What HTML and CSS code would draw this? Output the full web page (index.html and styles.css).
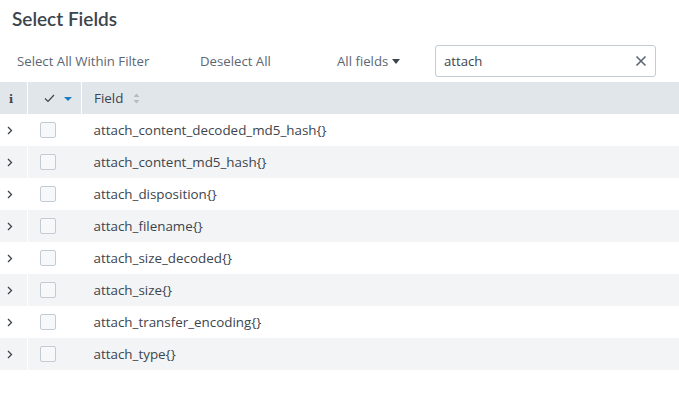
FILE: index.html
```html
<!DOCTYPE html>
<html lang="en">
<head>
  <meta charset="UTF-8" />
  <title>Select Fields</title>
  <link rel="stylesheet" href="styles.css">
</head>
<body>
  <div class="panel">
    <h1>Select Fields</h1>

    <!-- Toolbar -->
    <div class="toolbar">
      <button class="link-btn select-all">Select All Within Filter</button>
      <button class="link-btn deselect">Deselect All</button>
      <button class="link-btn fields-menu">All fields <span class="caret"></span></button>
      <div class="search">
        <input type="text" value="attach" />
        <svg class="clear" width="12" height="12" viewBox="0 0 12 12">
          <path d="M1.5 1.5 L10.5 10.5 M10.5 1.5 L1.5 10.5" stroke="#5c6773" stroke-width="1.6" fill="none"/>
        </svg>
      </div>
    </div>

    <table class="fields">
      <thead>
        <tr>
          <th class="col-info"><span class="info">i</span></th>
          <th class="col-check">
            <svg width="11" height="9" viewBox="0 0 11 9"><path d="M1 4.5 L4 7.5 L10 1" stroke="#3c444d" stroke-width="1.2" fill="none"/></svg>
            <span class="blue-caret"></span>
          </th>
          <th class="col-field">Field
            <svg class="sort" width="7" height="11" viewBox="0 0 7 11"><path d="M3.5 0.5 L6.5 4 L0.5 4 Z M3.5 10.5 L6.5 7 L0.5 7 Z" fill="#b5bcc4"/></svg>
          </th>
        </tr>
      </thead>
      <tbody id="rows"></tbody>
    </table>
  </div>

  <script>
  const fields = [
    'attach_content_decoded_md5_hash{}',
    'attach_content_md5_hash{}',
    'attach_disposition{}',
    'attach_filename{}',
    'attach_size_decoded{}',
    'attach_size{}',
    'attach_transfer_encoding{}',
    'attach_type{}'
  ];

  const rowsEl = document.getElementById('rows');

  fields.forEach((name) => {
    const tr = document.createElement('tr');
    tr.innerHTML = `
      <td class="col-info">
        <svg width="6" height="9" viewBox="0 0 6 9"><path d="M1 1 L4.5 4.5 L1 8" stroke="#3c444d" stroke-width="1.3" fill="none"/></svg>
      </td>
      <td class="col-check"><span class="box"></span></td>
      <td class="col-field">${name}</td>`;
    rowsEl.appendChild(tr);
  });
  </script>
</body>
</html>
```

FILE: styles.css
```css
body {
  margin: 0;
  font-family: "Open Sans", "Lato", sans-serif;
  background-color: white;
  color: #3c444d;
}

.panel {
  padding-top: 6px;
}

h1 {
  margin: 0 0 0 12px;
  font-family: "Lato", sans-serif;
  font-size: 19px;
  font-weight: 600;
  line-height: 26px;
  color: #3c444d;
}

.toolbar {
  display: flex;
  align-items: center;
  height: 32px;
  margin-top: 13px;
  padding-left: 17px;
}

.link-btn {
  background: none;
  border: none;
  padding: 0;
  font-family: inherit;
  font-size: 13.2px;
  color: #5c6773;
  cursor: pointer;
  display: flex;
  align-items: center;
  white-space: nowrap;
}

.select-all {
  width: 183px;
}

.deselect {
  width: 137px;
}

.fields-menu {
  width: 98px;
}

.caret {
  display: inline-block;
  margin-left: 4px;
  border-left: 4px solid transparent;
  border-right: 4px solid transparent;
  border-top: 5px solid #3c444d;
}

.search {
  width: 221px;
  height: 32px;
  box-sizing: border-box;
  border: 1px solid #c3cbd4;
  border-radius: 3px;
  display: flex;
  align-items: center;
  padding: 0 8px 0 8px;
}

.search input {
  flex: 1;
  border: none;
  outline: none;
  font-family: inherit;
  font-size: 13.2px;
  color: #3c444d;
  padding: 0;
  background: transparent;
}

.fields {
  margin-top: 5px;
  width: 100%;
  border-collapse: collapse;
  font-size: 13.4px;
}

.fields th,
.fields td {
  height: 32px;
  padding: 0;
  text-align: left;
  vertical-align: middle;
}

.fields th {
  background-color: #e1e6eb;
  font-weight: normal;
  border-right: 1px solid white;
}

.fields th:last-child {
  border-right: none;
}

.fields tbody tr:nth-child(even) td {
  background-color: #f2f4f5;
}

.col-info {
  width: 27px;
  text-align: center;
  border-right: 1px solid white;
}

.fields td.col-info {
  padding-left: 7px;
  width: 20px;
}

.col-check {
  width: 53px;
}

.fields th.col-check {
  padding-left: 16px;
  width: 37px;
}

.fields td.col-check {
  padding-left: 12px;
  width: 41px;
}

.fields th.col-field,
.fields td.col-field {
  padding-left: 12px;
}

.info {
  display: inline-block;
  margin-left: 9px;
  font-family: "DejaVu Serif", serif;
  font-weight: bold;
  font-size: 11px;
  color: #3c444d;
}

.blue-caret {
  display: inline-block;
  margin-left: 6px;
  vertical-align: middle;
  border-left: 4px solid transparent;
  border-right: 4px solid transparent;
  border-top: 4px solid #1a7cc1;
}

.sort {
  margin-left: 6px;
  vertical-align: -1px;
}

.box {
  display: block;
  width: 14px;
  height: 14px;
  border: 1px solid #c3cbd4;
  border-radius: 2px;
  background-color: #f7f8fa;
}
```
